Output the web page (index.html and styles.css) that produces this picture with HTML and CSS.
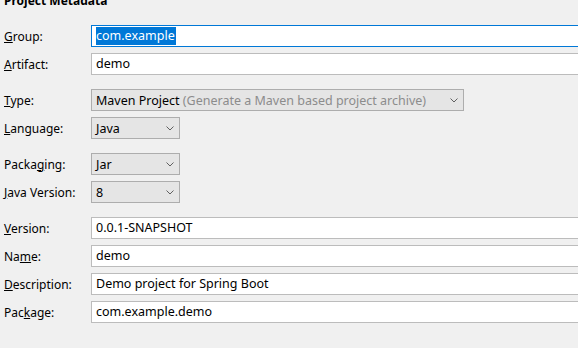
FILE: index.html
```html
<!DOCTYPE html>
<html lang="en">
<head>
  <meta charset="UTF-8">
  <title>Project Metadata</title>
  <link rel="stylesheet" href="styles.css">
</head>
<body>
  <div class="panel">
    <h2 class="title">Project Metadata</h2>

    <div class="group">
      <div class="row">
        <span class="label"><u>G</u>roup:</span>
        <div class="field focused"><span class="selected">com.example</span></div>
      </div>
      <div class="row">
        <span class="label"><u>A</u>rtifact:</span>
        <div class="field">demo</div>
      </div>
    </div>

    <div class="group">
      <div class="row">
        <span class="label"><u>T</u>ype:</span>
        <div class="combo wide">
          <span>Maven Project <span class="hint">(Generate a Maven based project archive)</span></span>
          <svg class="chevron" width="8" height="5" viewBox="0 0 8 5"><path d="M0.5 0.5 L4 4 L7.5 0.5" fill="none" stroke="#606060" stroke-width="1"/></svg>
        </div>
      </div>
      <div class="row">
        <span class="label"><u>L</u>anguage:</span>
        <div class="combo">
          <span>Java</span>
          <svg class="chevron" width="8" height="5" viewBox="0 0 8 5"><path d="M0.5 0.5 L4 4 L7.5 0.5" fill="none" stroke="#606060" stroke-width="1"/></svg>
        </div>
      </div>
    </div>

    <div class="group">
      <div class="row">
        <span class="label">Packa<u>g</u>ing:</span>
        <div class="combo">
          <span>Jar</span>
          <svg class="chevron" width="8" height="5" viewBox="0 0 8 5"><path d="M0.5 0.5 L4 4 L7.5 0.5" fill="none" stroke="#606060" stroke-width="1"/></svg>
        </div>
      </div>
      <div class="row">
        <span class="label"><u>J</u>ava Version:</span>
        <div class="combo">
          <span>8</span>
          <svg class="chevron" width="8" height="5" viewBox="0 0 8 5"><path d="M0.5 0.5 L4 4 L7.5 0.5" fill="none" stroke="#606060" stroke-width="1"/></svg>
        </div>
      </div>
    </div>

    <div class="group">
      <div class="row">
        <span class="label"><u>V</u>ersion:</span>
        <div class="field">0.0.1-SNAPSHOT</div>
      </div>
      <div class="row">
        <span class="label">Na<u>m</u>e:</span>
        <div class="field">demo</div>
      </div>
      <div class="row">
        <span class="label"><u>D</u>escription:</span>
        <div class="field">Demo project for Spring Boot</div>
      </div>
      <div class="row">
        <span class="label">Pac<u>k</u>age:</span>
        <div class="field">com.example.demo</div>
      </div>
    </div>
  </div>
</body>
</html>
```

FILE: styles.css
```css
body {
  margin: 0;
  background: #f0f0f0;
  font-family: 'Noto Sans', sans-serif;
  font-size: 12px;
  color: #000;
  overflow: hidden;
}
.panel {
  width: 600px;
  padding-left: 4px;
  display: flex;
  flex-direction: column;
  gap: 14px;
}
.title {
  font-size: 12px;
  font-weight: bold;
  margin: -6px 0 3px 0;
  line-height: 14px;
  height: 14px;
}
.group {
  display: flex;
  flex-direction: column;
  gap: 6px;
}
.row {
  display: flex;
  align-items: center;
  height: 22px;
}
.label {
  width: 87px;
  flex-shrink: 0;
}
.field {
  flex: 1;
  box-sizing: border-box;
  height: 22px;
  line-height: 20px;
  font-size: 12.5px;
  background: #fff;
  border: 1px solid #bcbcbc;
  padding-left: 4px;
  white-space: nowrap;
}
.field.focused {
  border-color: #0078d7;
}
.selected {
  background: #0078d7;
  color: #fff;
  display: inline-block;
  line-height: 18px;
  padding: 0 1px 0 0;
  vertical-align: top;
  margin-top: 1px;
}
.combo {
  box-sizing: border-box;
  width: 89px;
  height: 22px;
  background: #e5e5e5;
  border: 1px solid #adadad;
  display: flex;
  align-items: center;
  justify-content: space-between;
  padding: 0 5px 0 4px;
  font-size: 12.5px;
  white-space: nowrap;
}
.combo.wide {
  width: 373px;
}
.hint {
  color: #8c8c8c;
}
.chevron {
  display: block;
}
```
